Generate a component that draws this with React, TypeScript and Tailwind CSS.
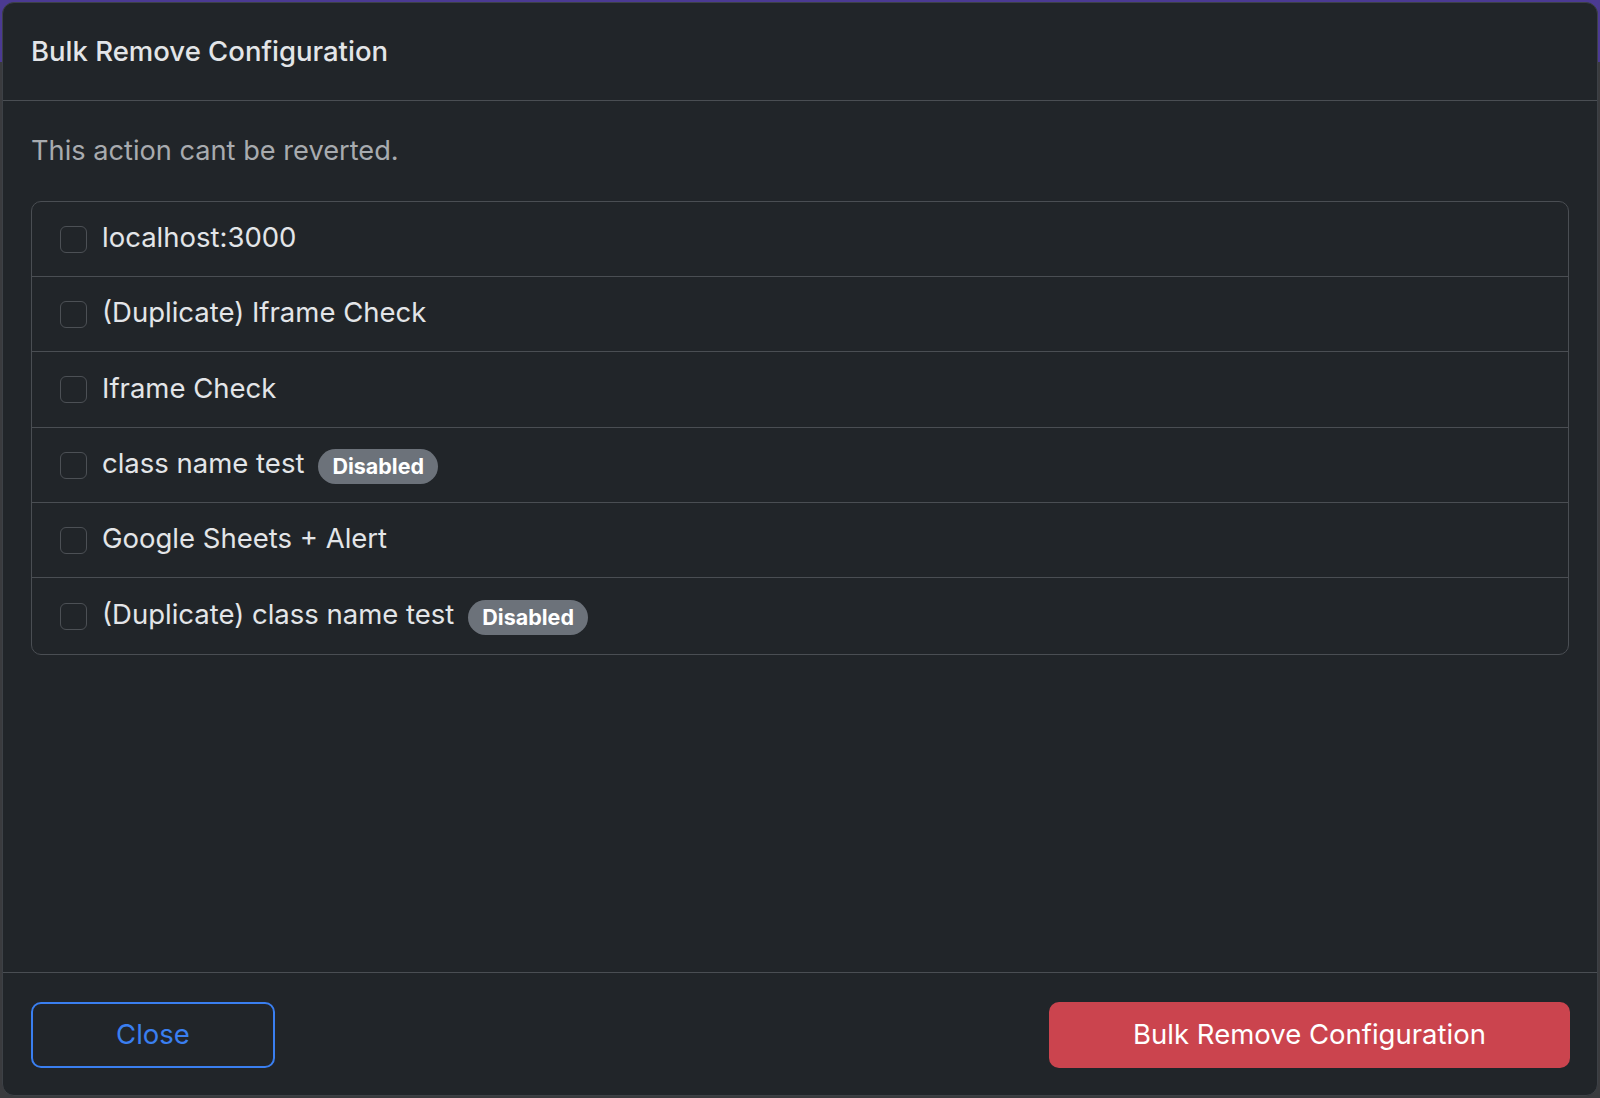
import React from "react";

const items = [
  { label: "localhost:3000", disabled: false },
  { label: "(Duplicate) Iframe Check", disabled: false },
  { label: "Iframe Check", disabled: false },
  { label: "class name test", disabled: true },
  { label: "Google Sheets + Alert", disabled: false },
  { label: "(Duplicate) class name test", disabled: true },
];

export default function App() {
  return (
    <div
      className="h-screen w-full p-[2px] bg-[linear-gradient(to_bottom,#4b3a93_0px,#4b3a93_62px,#3a3b3e_62px)]"
      style={{ fontFamily: "Inter, 'Noto Sans', sans-serif" }}
    >
      <div className="h-full flex flex-col bg-[#212529] border border-[#3d4146] rounded-[12px] overflow-hidden">
        <div className="h-[98px] shrink-0 flex items-center px-[28px] border-b border-[#4a4e53]">
          <h5 className="text-[27.5px] font-medium text-[#e3e5e8] mt-[1px]">Bulk Remove Configuration</h5>
        </div>

        <div className="flex-1 px-[28px] pt-[35px]">
          <p className="text-[27.2px] leading-[30px] text-[#a8abaf]">This action cant be reverted.</p>

          <ul className="mt-[35px] border border-[#4a4e53] rounded-[10px]">
            {items.map((it, i) => (
              <li
                key={it.label}
                className={
                  "flex items-center pl-[28px] gap-[14px] " +
                  (i === 2 || i === 5 ? "h-[76px] " : "h-[75px] ") +
                  (i < items.length - 1 ? "border-b border-[#4a4e53]" : "")
                }
              >
                <span className="w-[27px] h-[27px] rounded-[6px] border-[1.5px] border-[#4c5055] shrink-0 mr-[1px]" />
                <span className="text-[27.5px] text-[#e3e5e8] leading-none -mt-[2px]">{it.label}</span>
                {it.disabled && (
                  <span className="h-[35px] px-[14px] rounded-full bg-[#6c727a] text-white text-[21.5px] font-bold flex items-center mt-[2px]">
                    Disabled
                  </span>
                )}
              </li>
            ))}
          </ul>
        </div>

        <div className="h-[123px] shrink-0 border-t border-[#4a4e53] flex items-start justify-between pl-[28px] pr-[27px] pt-[29px]">
          <button className="w-[244px] h-[66px] rounded-[10px] border-2 border-[#3a7ff0] text-[#3a7ff0] text-[27.5px]">
            Close
          </button>
          <button className="w-[521px] h-[66px] rounded-[10px] bg-[#cb444e] text-white text-[27.5px]">
            Bulk Remove Configuration
          </button>
        </div>
      </div>
    </div>
  );
}
